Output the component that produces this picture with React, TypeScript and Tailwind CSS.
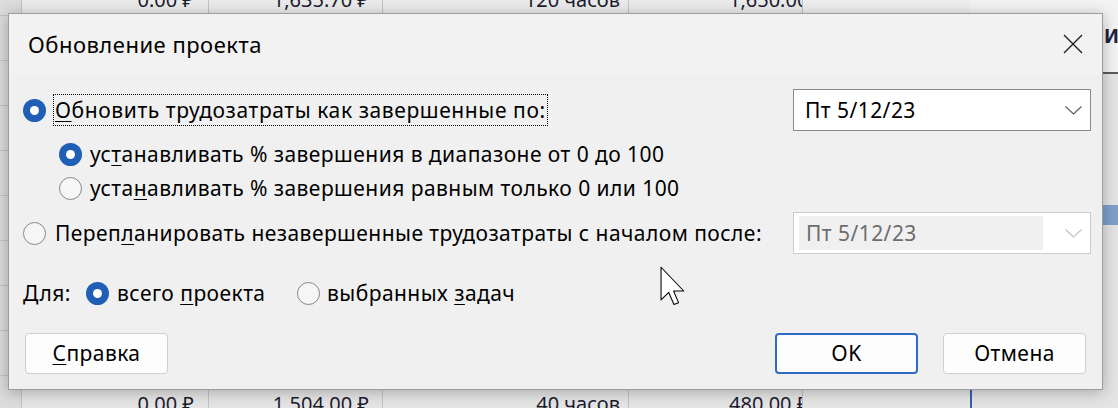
import React from "react";

const F = "font-['Noto_Sans','Open_Sans',sans-serif]";

function U({ children }: { children: React.ReactNode }) {
  return <span className="underline decoration-1 underline-offset-[3px]">{children}</span>;
}

function Radio({ on }: { on?: boolean }) {
  return on ? (
    <span className="flex h-[23px] w-[23px] shrink-0 items-center justify-center rounded-full bg-[#1f5fb6]">
      <span className="block h-[9px] w-[9px] rounded-full bg-white" />
    </span>
  ) : (
    <span className="block h-[23px] w-[23px] shrink-0 rounded-full border border-[#878787] bg-[#f6f6f6]" />
  );
}

function Chevron({ light }: { light?: boolean }) {
  return (
    <svg width="17" height="9" viewBox="0 0 17 9" fill="none">
      <path d="M0.5 0.5 L8.5 8 L16.5 0.5" stroke={light ? "#c2c2c2" : "#5c5c5c"} strokeWidth="1.1" />
    </svg>
  );
}

function Col({
  w,
  top,
  bottom,
  align,
}: {
  w: string;
  top?: string;
  bottom?: string;
  align: string;
}) {
  return (
    <div className={`flex shrink-0 flex-col justify-between border-r border-[#c3c3c3] bg-[#e5e5e5] ${w}`}>
      <div
        className={`-mt-[15px] flex h-[30px] items-center overflow-hidden whitespace-nowrap border-b border-[#c3c3c3] bg-[#ebebeb] text-[20px] text-[#1c1c30] ${align}`}
      >
        {top}
      </div>
      <div
        className={`-mb-[10px] flex h-[30px] items-center overflow-hidden whitespace-nowrap border-t border-[#c3c3c3] text-[20px] text-[#1c1c30] ${align}`}
      >
        {bottom}
      </div>
    </div>
  );
}

function Background() {
  return (
    <div className="flex h-full w-full">
      <div className="flex w-[22px] shrink-0 flex-col border-r border-[#c2c2c2] bg-[#dcdcdc]">
        <div className="h-[16px] shrink-0 border-b border-[#c4c4c4]" />
        {Array.from({ length: 9 }).map((_, i) => (
          <div key={i} className="h-[45px] shrink-0 border-b border-[#c4c4c4]" />
        ))}
      </div>
      <Col w="w-[187px]" top="0.00 ₽" bottom="0.00 ₽" align="justify-end pr-[14px]" />
      <Col w="w-[174px]" top="1,635.70 ₽" bottom="1,504.00 ₽" align="justify-end pr-[13px]" />
      <Col w="w-[246px]" top="120 часов" bottom="40 часов" align="justify-end pr-[8px]" />
      <Col w="w-[174px]" top="1,650.00 ₽" bottom="480.00 ₽" align="justify-start pl-[100px]" />
      <div className="flex w-[167px] shrink-0 flex-col bg-[#e6e6e6]">
        <div className="h-[13px] bg-[#eeeeee]" />
      </div>
      <div className="flex w-[148px] shrink-0 flex-col bg-[#e4e4e4]">
        <div className="h-[74px] shrink-0 overflow-hidden whitespace-nowrap border-b-2 border-[#5a5a5a] bg-[#f3f3f3] pl-[134px] pt-[22px] text-[19px] font-bold text-[#1c2340]">
          Исп
        </div>
        <div className="mt-[131px] h-[20px] shrink-0 bg-[#7f9fcc]" />
        <div className="flex-1" />
        <div className="h-[18px] shrink-0 border-l-2 border-[#3460b0]" />
      </div>
    </div>
  );
}

function Button({ children, primary }: { children: React.ReactNode; primary?: boolean }) {
  return (
    <div
      className={`flex h-[41px] w-[143px] items-center justify-center rounded-[4px] bg-[#fdfdfd] ${
        primary ? "border-2 border-[#2f6cc4]" : "border border-[#cfcfcf]"
      }`}
    >
      {children}
    </div>
  );
}

function Dialog() {
  return (
    <div className="absolute left-[8px] top-[13px] flex h-[377px] w-[1095px] flex-col border border-[#9d9d9d] bg-[#f0f0f0] text-[21px] leading-none tracking-[0.45px] text-black shadow-[0_2px_14px_rgba(0,0,0,0.28)]">
      <div className="flex h-[60px] shrink-0 items-center justify-between bg-[#f2f2f2] pl-[19px] pr-[19px]">
        <span className="text-[22px] tracking-[0.5px]">Обновление проекта</span>
        <svg width="20" height="20" viewBox="0 0 20 20" fill="none">
          <path d="M1 1L19 19M19 1L1 19" stroke="#1a1a1a" strokeWidth="1.3" />
        </svg>
      </div>
      <div className="flex flex-1 flex-col pl-[14px] pr-[11px] pt-[15px]">
        <div className="flex h-[42px] items-center justify-between">
          <div className="flex items-center gap-[7px]">
            <Radio on />
            <span className="flex h-[32px] items-center border border-dotted border-black px-[1px] tracking-[0.6px]">
              <span>
                <U>О</U>бновить трудозатраты как завершенные по:
              </span>
            </span>
          </div>
          <div className="flex h-[42px] w-[298px] items-center justify-between border border-[#8a8a8a] bg-white pl-[11px] pr-[8px]">
            <span>Пт 5/12/23</span>
            <Chevron />
          </div>
        </div>

        <div className="mt-[6px] flex h-[34px] items-center gap-[8px] pl-[36px]">
          <Radio on />
          <span>
            ус<U>т</U>анавливать % завершения в диапазоне от 0 до 100
          </span>
        </div>
        <div className="flex h-[34px] items-center gap-[8px] pl-[36px]">
          <Radio />
          <span>
            уста<U>н</U>авливать % завершения равным только 0 или 100
          </span>
        </div>

        <div className="mt-[7px] flex h-[42px] items-center justify-between">
          <div className="flex items-center gap-[9px]">
            <Radio />
            <span>
              Переп<U>л</U>анировать незавершенные трудозатраты с началом после:
            </span>
          </div>
          <div className="flex h-[42px] w-[298px] items-stretch border border-[#cccccc] bg-white py-[3px] pl-[5px] pr-[8px]">
            <div className="flex flex-1 items-center bg-[#f0f0f0] pl-[7px] text-[#6d6d6d]">Пт 5/12/23</div>
            <div className="flex w-[39px] items-center justify-end">
              <Chevron light />
            </div>
          </div>
        </div>

        <div className="mt-[22px] flex h-[34px] items-center">
          <span className="w-[63px] shrink-0">Для:</span>
          <Radio on />
          <span className="ml-[8px] w-[180px] shrink-0">
            всего <U>п</U>роекта
          </span>
          <Radio />
          <span className="ml-[7px]">
            выбранных <U>з</U>адач
          </span>
        </div>

        <div className="mt-[23px] flex h-[41px] items-center justify-between pl-[2px] pr-[5px]">
          <Button>
            <U>С</U>правка
          </Button>
          <div className="flex gap-[25px]">
            <Button primary>OK</Button>
            <Button>Отмена</Button>
          </div>
        </div>
      </div>
    </div>
  );
}

function Cursor() {
  return (
    <svg
      className="absolute left-[660px] top-[266px]"
      width="25"
      height="40"
      viewBox="0 0 12 19"
      fill="none"
    >
      <path
        d="M0.5 0.5 L0.5 16.2 L4.2 12.6 L6.7 18.4 L8.9 17.5 L6.5 11.9 L11.4 11.9 Z"
        fill="white"
        stroke="black"
        strokeWidth="0.5"
        strokeLinejoin="round"
      />
    </svg>
  );
}

export default function App() {
  return (
    <div className={`relative h-[408px] w-[1118px] overflow-hidden bg-[#e4e4e4] ${F}`}>
      <Background />
      <Dialog />
      <Cursor />
    </div>
  );
}
